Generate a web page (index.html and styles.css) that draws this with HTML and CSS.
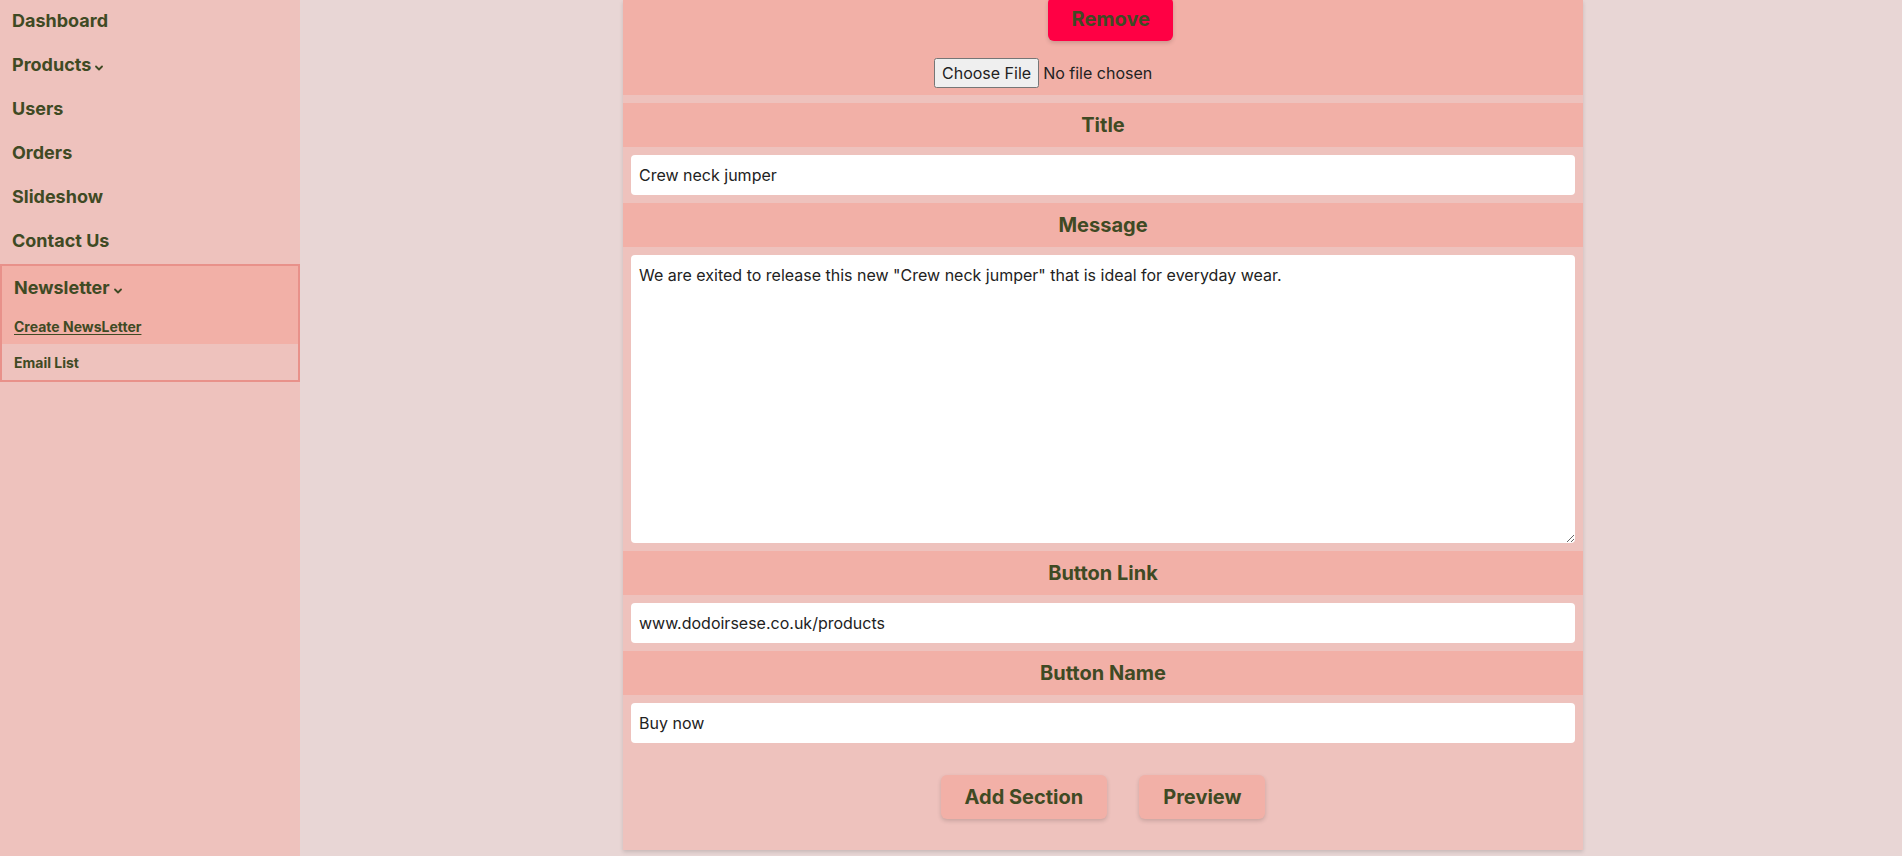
FILE: index.html
```html
<!DOCTYPE html>
<html lang="en">
<head>
<meta charset="utf-8">
<title>Create Newsletter</title>
<link rel="stylesheet" href="styles.css">
</head>
<body>
<aside class="sidebar">
  <nav class="nav">
    <div class="nav-item">Dashboard</div>
    <div class="nav-item">Products<svg class="chev" width="8" height="6" viewBox="0 0 8 6"><path d="M1 1.5 L4 4.5 L7 1.5" fill="none" stroke="currentColor" stroke-width="1.8" stroke-linecap="round" stroke-linejoin="round"/></svg></div>
    <div class="nav-item">Users</div>
    <div class="nav-item">Orders</div>
    <div class="nav-item">Slideshow</div>
    <div class="nav-item">Contact Us</div>
  </nav>
  <div class="nl-box">
    <div class="nl-active">
      <div class="nl-title">Newsletter<svg class="chev" width="8" height="6" viewBox="0 0 8 6"><path d="M1 1.5 L4 4.5 L7 1.5" fill="none" stroke="currentColor" stroke-width="1.8" stroke-linecap="round" stroke-linejoin="round"/></svg></div>
      <a class="nl-link nl-current" href="#">Create NewsLetter</a>
    </div>
    <a class="nl-link" href="#">Email List</a>
  </div>
</aside>
<main class="main">
  <section class="panel">
    <div class="top-section">
      <div class="remove-row"><button class="btn btn-remove" type="button">Remove</button></div>
      <div class="file-row"><input class="file-input" type="file"></div>
    </div>
    <div class="field-head">Title</div>
    <input class="field-input" type="text" value="Crew neck jumper">
    <div class="field-head">Message</div>
    <textarea class="field-area">We are exited to release this new "Crew neck jumper" that is ideal for everyday wear.</textarea>
    <div class="field-head">Button Link</div>
    <input class="field-input" type="text" value="www.dodoirsese.co.uk/products">
    <div class="field-head">Button Name</div>
    <input class="field-input" type="text" value="Buy now">
    <div class="actions">
      <button class="btn btn-soft" type="button">Add Section</button>
      <button class="btn btn-soft" type="button">Preview</button>
    </div>
  </section>
</main>
</body>
</html>
```
FILE: styles.css
```css
* { box-sizing: border-box; }

html, body {
  margin: 0;
  height: 856px;
  overflow: hidden;
}

body {
  display: flex;
  background: #e8d6d5;
  font-family: Inter, "Liberation Sans", sans-serif;
  color: #3f4a24;
}

.sidebar {
  width: 300px;
  flex: none;
  background: #eec2bd;
  height: 856px;
}

.nav {
  display: flex;
  flex-direction: column;
  gap: 4px;
  margin-bottom: 4px;
}

.nav-item {
  height: 40px;
  display: flex;
  align-items: center;
  padding-left: 12px;
  font-size: 18px;
  font-weight: 700;
}

.chev {
  margin-left: 4px;
  margin-top: 8px;
}

.nl-box {
  border: 2px solid #e8918a;
  background: #eec2bd;
}

.nl-active {
  background: #f2b0a7;
}

.nl-title {
  height: 42px;
  display: flex;
  align-items: center;
  padding-left: 12px;
  font-size: 18px;
  font-weight: 700;
}

.nl-link {
  height: 36px;
  display: flex;
  align-items: center;
  padding-left: 12px;
  font-size: 14px;
  font-weight: 700;
  color: #3f4a24;
  text-decoration: none;
}

.nl-current {
  text-decoration: underline;
  text-underline-offset: 2px;
}

.main {
  flex: 1;
  display: flex;
  justify-content: center;
  padding-left: 4px;
}

.panel {
  width: 960px;
  height: 850px;
  background: #eec2bd;
  box-shadow: 0 2px 4px rgba(0, 0, 0, 0.14);
  display: flex;
  flex-direction: column;
  gap: 8px;
}

.top-section {
  background: #f2b0a7;
  height: 95px;
  display: flex;
  flex-direction: column;
  align-items: center;
}

.remove-row {
  display: flex;
  justify-content: center;
  width: 100%;
  padding-left: 14px;
  margin-top: -3px;
}

.file-row {
  margin-top: 17px;
  display: flex;
  justify-content: center;
  width: 100%;
}

.file-input {
  width: 338px;
  font-family: Inter, "Liberation Sans", sans-serif;
  font-size: 16px;
  color: #222;
}

.file-input::file-selector-button {
  font-family: Inter, "Liberation Sans", sans-serif;
  font-size: 16px;
  padding: 3px 6px;
  margin-right: 4px;
  color: #222;
}

.btn {
  height: 44px;
  padding: 0 24px;
  border: none;
  border-radius: 6px;
  font-family: Inter, "Liberation Sans", sans-serif;
  font-size: 20px;
  font-weight: 700;
  color: #3f4a24;
  box-shadow: 0 2px 4px rgba(0, 0, 0, 0.16);
}

.btn-remove {
  width: 125px;
  background: #ff0044;
}

.btn-soft {
  background: #f2b0a7;
}

.field-head {
  height: 44px;
  background: #f2b0a7;
  display: flex;
  align-items: center;
  justify-content: center;
  font-size: 20px;
  font-weight: 700;
}

.field-input,
.field-area {
  margin: 0 8px;
  border: none;
  border-radius: 4px;
  background: #fff;
  font-family: Inter, "Liberation Sans", sans-serif;
  font-size: 16px;
  color: #222;
  padding: 0 8px;
  outline: none;
}

.field-input {
  height: 40px;
}

.field-area {
  height: 288px;
  padding: 8px;
  line-height: 24px;
}

.actions {
  margin-top: 24px;
  display: flex;
  justify-content: center;
  gap: 32px;
}
```
